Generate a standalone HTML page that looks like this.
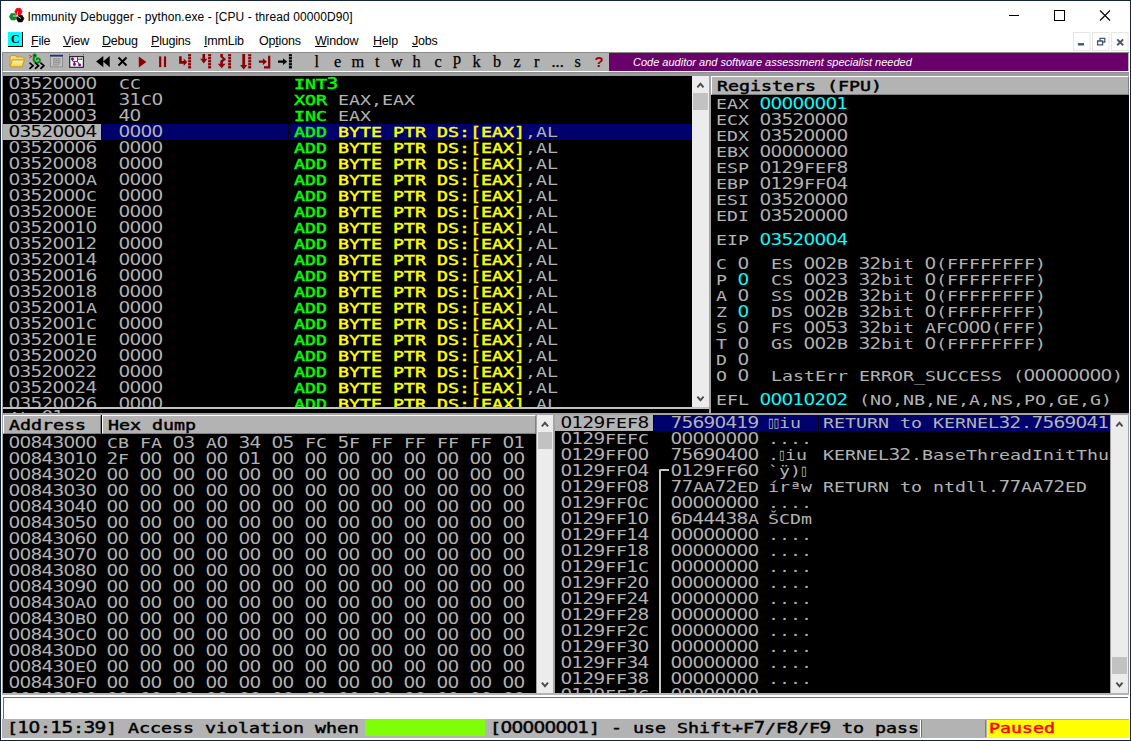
<!DOCTYPE html>
<html><head><meta charset="utf-8"><title>Immunity Debugger</title>
<style>
html,body{margin:0;padding:0;background:#fff;}
body{width:1131px;height:741px;overflow:hidden;position:relative;font-family:"Liberation Sans",sans-serif;}
#win{position:absolute;left:0;top:0;width:1131px;height:741px;background:#fff;overflow:hidden;}
#frame{position:absolute;left:0;top:0;width:1128.500px;height:738.500px;border-left:1px solid #16233f;border-top:1px solid #16233f;border-right:1.500px solid #16233f;border-bottom:1.500px solid #16233f;pointer-events:none;z-index:10}
#title{position:absolute;left:27.5px;top:10px;font:12px/14px "Liberation Sans",sans-serif;color:#000;white-space:nowrap;letter-spacing:0.09px}
#appicon{position:absolute;left:0;top:0}
#wctl{position:absolute;left:990.2px;top:0}
#cicon{position:absolute;left:8px;top:32px;width:14px;height:14px;background:#0ff;border-right:1px solid #000;border-bottom:1px solid #000;}
#cicon span{position:absolute;left:3px;top:0;font:bold 12px/14px "Liberation Serif",serif;color:#000}
.mi{position:absolute;top:33px;font:12.5px/16px "Liberation Sans",sans-serif;color:#000;white-space:nowrap;letter-spacing:-0.2px}
.mi u{text-decoration:underline;text-underline-offset:1px}
#mdi{position:absolute;left:1073px;top:31.500px}
#tb{position:absolute;left:2px;top:52px;width:1127px;height:20px;background:#b3b3b3;border-top:1px solid #8c8c8c;border-left:1px solid #8c8c8c;border-bottom:1px solid #fff;box-sizing:border-box}
#tbi{position:absolute;left:0;top:52px}
#banner{position:absolute;left:609px;top:53px;width:519px;height:18px;background:#6a006a}
#banner span{position:absolute;left:24px;top:2px;font:italic 11px/14px "Liberation Sans",sans-serif;color:#fff;white-space:nowrap}
.tl{position:absolute;top:52.5px;font:16.3px/18px "Liberation Serif",serif;color:#000;-webkit-text-stroke:0.25px #000}
.tl.q{top:53px;color:#a00000;font:bold 15px/18px "Liberation Sans",sans-serif;-webkit-text-stroke:0}
#mid{position:absolute;left:2px;top:72px;width:1127px;height:623px;background:#a4a4a6;border-top:1px solid #8e908e;box-sizing:border-box}
#mid2{position:absolute;left:2px;top:73px;width:1127px;height:3px;background:#9c9c9f}
#mid3{position:absolute;left:3px;top:407px;width:706px;height:2px;background:#c2c2c2}
#mid4{position:absolute;left:2px;top:693px;width:1127px;height:2px;background:#b3b3b3}
.pane{position:absolute;background:#000;overflow:hidden;color:#b3b3b3}
.r{position:absolute;height:16px;line-height:16px;white-space:pre;font-family:"DejaVu Sans Mono",monospace;font-size:15.5px;word-spacing:1.6682px;font-weight:normal}
.r span{line-height:16px}
.u,.n,.d{display:inline-block;transform-origin:0 0;white-space:pre;line-height:16px;vertical-align:baseline}
.u{font-family:"DejaVu Sans Mono",monospace;font-size:13.5px;transform:scaleX(1.3535)}
.B .u{font-weight:normal;-webkit-text-stroke:0.42px}
.d{font-family:"DejaVu Sans Mono",monospace;font-size:14.5px;transform:scaleX(1.26)}
.n{font-family:"DejaVu Sans","DejaVu Sans Mono",sans-serif;font-size:15.5px;transform:translateX(-0.6px) scaleX(1.19);letter-spacing:-0.616px}
.B .n,.B .d{font-weight:normal;-webkit-text-stroke:0.45px}
.g{color:#0f0;font-weight:bold}
.B{font-weight:bold}
.bx{display:inline-block;width:5.5px;font-family:"DejaVu Sans Mono",monospace;font-size:13px;line-height:16px;text-indent:-1.3px;white-space:pre;vertical-align:baseline;overflow:visible;transform:scaleY(1.3);transform-origin:0 80%}
.y{color:#ff0;font-weight:bold}
.selbg{position:absolute;background:#00006c}
.selad{position:absolute;background:#b3b3b3}
.hdr{position:absolute;background:#b3b3b3;color:#000;font-weight:bold;box-sizing:border-box;border-top:1px solid #fff;border-left:1px solid #fff;border-bottom:1px solid #808080;border-right:1px solid #808080}
.sb{position:absolute;background:#ececec}
.sb .th{position:absolute;left:1px;right:1px;background:#c2c2c2}
.sb i{position:absolute;left:5.4px;width:4.3px;height:4.3px;border-left:1.9px solid #484848;border-top:1.9px solid #484848}
.sb i.up{top:7.5px;transform:rotate(45deg)}
.sb i.dn{bottom:7.5px;transform:rotate(-135deg)}
#cmd{position:absolute;left:3px;top:697px;width:1125px;height:22px;background:#fff;border-top:1.5px solid #6e6e6e;border-left:1px solid #6e6e6e;box-sizing:border-box}
#status{position:absolute;left:2px;top:719px;width:1127px;height:19px;background:#b3b3b3}
</style></head>
<body><div id="win">
<div id="mid"></div><div id="mid2"></div><div id="mid3"></div><div id="mid4"></div>
<div id="title">Immunity Debugger - python.exe - [CPU - thread 00000D90]</div>
<svg id="appicon" width="32" height="30" viewBox="0 0 32 30">
<polygon points="22.30,11.60 20.40,14.89 16.60,14.89 14.70,11.60 16.60,8.31 20.40,8.31" fill="#f0001c" stroke="#f0001c" stroke-width="0.6" stroke-linejoin="round"/>
<polygon points="16.90,16.70 15.00,19.99 11.20,19.99 9.30,16.70 11.20,13.41 15.00,13.41" fill="#0c8a2a" stroke="#0c8a2a" stroke-width="0.6" stroke-linejoin="round"/>
<polygon points="24.00,18.60 22.10,21.89 18.30,21.89 16.40,18.60 18.30,15.31 22.10,15.31" fill="#000" stroke="#000" stroke-width="0.6" stroke-linejoin="round"/>
<path d="M17.500 11.500v4M12.800 16h4.400l3.800 2.400" stroke="#fff" stroke-width="0.9" fill="none" stroke-opacity="0.85"/>
</svg>
<svg id="wctl" width="140" height="31" viewBox="0 0 140 31">
<path d="M19 15.5h10" stroke="#000" stroke-width="1"/>
<rect x="64.5" y="10.5" width="10" height="10" fill="none" stroke="#000" stroke-width="1"/>
<path d="M110 10.5l10 10M120 10.5l-10 10" stroke="#000" stroke-width="1.1"/>
</svg>
<div id="cicon"><span>C</span></div>
<div class="mi" style="left:31px"><u>F</u>ile</div>
<div class="mi" style="left:63px"><u>V</u>iew</div>
<div class="mi" style="left:102px"><u>D</u>ebug</div>
<div class="mi" style="left:151px"><u>P</u>lugins</div>
<div class="mi" style="left:204px"><u>I</u>mmLib</div>
<div class="mi" style="left:259px">Op<u>t</u>ions</div>
<div class="mi" style="left:315px"><u>W</u>indow</div>
<div class="mi" style="left:373px"><u>H</u>elp</div>
<div class="mi" style="left:412px"><u>J</u>obs</div>
<svg id="mdi" width="58" height="20" viewBox="0 0 58 20">
<g fill="#fff" stroke="#e6e6e6"><rect x="0.5" y="0.5" width="16.5" height="18"/><rect x="19.5" y="0.5" width="16.5" height="18"/><rect x="38.5" y="0.5" width="16.500" height="18"/></g>
<path d="M4.900 12.300h6.200" stroke="#46546e" stroke-width="2.400"/>
<path d="M24.600 9h5v3.800h-5zM27 8.500v-2.200h4.800v3.800h-2" fill="none" stroke="#46546e" stroke-width="1.300"/>
<path d="M44.200 7.400l6 5.800M50.200 7.400l-6 5.800" stroke="#46546e" stroke-width="2"/>
</svg>
<div id="tb"></div>
<div id="banner"><span>Code auditor and software assessment specialist needed</span></div>
<div class="tl" style="left:314.5px">l</div>
<div class="tl" style="left:334px">e</div>
<div class="tl" style="left:351.5px">m</div>
<div class="tl" style="left:375px">t</div>
<div class="tl" style="left:391px">w</div>
<div class="tl" style="left:412.5px">h</div>
<div class="tl" style="left:434.5px">c</div>
<div class="tl" style="left:453px;top:49.7px">p</div>
<div class="tl" style="left:472.5px">k</div>
<div class="tl" style="left:493px">b</div>
<div class="tl" style="left:513.5px">z</div>
<div class="tl" style="left:534px">r</div>
<div class="tl" style="left:551.5px">...</div>
<div class="tl" style="left:574.5px">s</div>
<div class="tl q" style="left:594.5px">?</div>
<svg id="tbi" width="300" height="22" viewBox="0 52 300 22">
<defs><linearGradient id="fg" x1="0" y1="0" x2="0" y2="1"><stop offset="0" stop-color="#fff8b8"/><stop offset="1" stop-color="#f1cf55"/></linearGradient></defs>
<path d="M10 66v-8.500q0-2 2-2h3.500l1.500 1.500h5.500q1.500 0 1.500 1.500v2" fill="#f6dc78" stroke="#d1a01e" stroke-width="1.200"/>
<path d="M10 66.800l2.300-7h12.200l-2.300 7z" fill="url(#fg)" stroke="#d1a01e" stroke-width="1.200" stroke-linejoin="round"/>
<path d="M29.100 55.100l2.700 1.500-2.700 1.600M30.200 56.600h1.600" stroke="#f02030" stroke-width="0.900" fill="none"/>
<circle cx="34.700" cy="55.700" r="2.150" fill="#0a8a14"/><circle cx="34.500" cy="55.500" r="0.550" fill="#022"/>
<path d="M34 57.200C33.300 59.200 33.700 61.600 36 62.500C38.500 63.300 40.200 61.800 39.900 60C39.600 58.200 37.500 57.900 36.600 59.300" fill="none" stroke="#0a8a14" stroke-width="2.100" stroke-linecap="round"/>
<path d="M29.500 62.600l3.500 3.100-3.500 3.100M35 62.600l3.500 3.100-3.500 3.100M40.400 62.600l3.500 3.100-3.500 3.100" fill="none" stroke="#000" stroke-width="1.700"/>
<rect x="50.500" y="56.500" width="12" height="10.300" fill="#c4c4c4" stroke="#8c8c8c"/>
<rect x="50" y="54.800" width="13" height="1.600" fill="#28288c"/>
<path d="M53.500 58.500h6.500v5l-1.500 1.500h-5z" fill="#b0b0b0" stroke="#909090" stroke-width="0.800"/>
<path d="M54.500 60.500h4.500M54.500 62.500h4.500" stroke="#8a8a8a" stroke-width="0.800"/>
<rect x="69.700" y="56.600" width="13.700" height="10.700" fill="#fff" stroke="#2a2a2a" stroke-width="1.250"/>
<path d="M69.200 54.600h0.900M83.100 54.600h0.900" stroke="#222" stroke-width="0.800"/>
<g fill="#850088" stroke="#850088">
<circle cx="72.500" cy="59" r="1.300" stroke-width="0.500"/>
<path d="M77.500 57.200v4.600M77.900 59.200h3.600M72.300 60l0.800 1.600h4.400M74.600 61.600l-0.200 2M77.600 61.800l2.200 3.200" fill="none" stroke-width="0.950"/>
<circle cx="81.500" cy="59.100" r="0.500" stroke-width="0.400"/>
<ellipse cx="74.400" cy="64.300" rx="1.150" ry="1.450" stroke-width="0.500"/>
<ellipse cx="79.700" cy="65" rx="1.250" ry="1.150" stroke-width="0.500"/>
</g>
<path d="M103.300 56v11.200l-7.200-5.600zM109.700 56v11.200l-6.600-5.600z" fill="#000"/>
<path d="M118.500 57.500l8 8M126.500 57.500l-8 8" stroke="#000" stroke-width="2"/>
<path d="M138.800 56.400v11l7.600-5.500z" fill="#8c0004"/>
<rect x="159.100" y="56.400" width="2.200" height="10.700" fill="#8c0004"/><rect x="163.900" y="56.400" width="2.200" height="10.700" fill="#8c0004"/>
<path d="M179.100 56.300h2.600v4.800h2v-2.600l3.600 3.800-3.600 3.800v-2.400h-4.600z" fill="#8c0004"/>
<rect x="188.1" y="54.1" width="3" height="2.3" fill="#8c0004"/><rect x="188.1" y="57.1" width="3" height="2.3" fill="#8c0004"/><rect x="188.1" y="60.1" width="3" height="2.3" fill="#8c0004"/><rect x="188.1" y="63.1" width="3" height="2.3" fill="#8c0004"/><rect x="188.1" y="66.1" width="3" height="2.3" fill="#8c0004"/>
<path d="M202.500 54.100h2.600v4.600h2.300l-3.600 4.800-3.600-4.800h2.300z" fill="#8c0004"/>
<rect x="208.1" y="54.1" width="3" height="2.3" fill="#8c0004"/><rect x="208.1" y="57.1" width="3" height="2.3" fill="#8c0004"/><rect x="208.1" y="60.1" width="3" height="2.3" fill="#8c0004"/><rect x="208.1" y="63.1" width="3" height="2.3" fill="#8c0004"/><rect x="208.1" y="66.1" width="3" height="2.3" fill="#8c0004"/>
<path d="M220.300 54.100h2.600v2.400l3.200 2.800-3.200 2.600v1.900h2.700l-3.900 4.500-3.900-4.500h2.500v-3.100l2.600-1.700-2.600-1.900z" fill="#8c0004"/>
<rect x="228.1" y="54.1" width="3" height="2.3" fill="#8c0004"/><rect x="228.1" y="57.1" width="3" height="2.3" fill="#8c0004"/><rect x="228.1" y="60.1" width="3" height="2.3" fill="#8c0004"/><rect x="228.1" y="63.1" width="3" height="2.3" fill="#8c0004"/><rect x="228.1" y="66.1" width="3" height="2.3" fill="#8c0004"/>
<path d="M242.300 54.100h2.800v10.900h2.200l-3.600 4.500-3.600-4.500h2.200z" fill="#8c0004"/>
<rect x="248.2" y="54.1" width="3" height="2.3" fill="#8c0004"/><rect x="248.2" y="57.1" width="3" height="2.3" fill="#8c0004"/><rect x="248.2" y="60.1" width="3" height="2.3" fill="#8c0004"/><rect x="248.2" y="63.1" width="3" height="2.3" fill="#8c0004"/><rect x="248.2" y="66.1" width="3" height="2.3" fill="#8c0004"/>
<path d="M258.900 60.600h4v-2.300l4 3.400-4 3.400v-2.300h-4z" fill="#8c0004"/>
<path d="M268.100 55.700h2.200v12.700h-6.300v-2.100h4.100z" fill="#8c0004"/>
<path d="M278 60.600h5v-2.300l4.200 3.400-4.200 3.400v-2.300h-5z" fill="#000"/>
<rect x="288.9" y="54.1" width="3" height="2.3" fill="#000"/><rect x="288.9" y="57.1" width="3" height="2.3" fill="#000"/><rect x="288.9" y="60.1" width="3" height="2.3" fill="#000"/><rect x="288.9" y="63.1" width="3" height="2.3" fill="#000"/><rect x="288.9" y="66.1" width="3" height="2.3" fill="#000"/>
</svg>
<div class="pane" style="left:3px;top:76px;width:689px;height:331px">
<div class="r" style="left:5.5px;top:0px;"><span class="n" style="width:88px">03520000</span></div>
<div class="r" style="left:115.5px;top:0px;"><span class="u" style="width:22px">CC</span></div>
<div class="r" style="left:290.5px;top:0px;"><span class="g B"><span class="u" style="width:33px">INT</span><span class="n" style="width:11px">3</span></span></div>
<div class="r" style="left:5.5px;top:16px;"><span class="n" style="width:88px">03520001</span></div>
<div class="r" style="left:115.5px;top:16px;"><span class="n" style="width:22px">31</span><span class="u" style="width:11px">C</span><span class="n" style="width:11px">0</span></div>
<div class="r" style="left:290.5px;top:16px;"><span class="g B"><span class="u" style="width:33px">XOR</span></span> <span class="u" style="width:33px">EAX</span><span class="d" style="width:11px">,</span><span class="u" style="width:33px">EAX</span></div>
<div class="r" style="left:5.5px;top:32px;"><span class="n" style="width:88px">03520003</span></div>
<div class="r" style="left:115.5px;top:32px;"><span class="n" style="width:22px">40</span></div>
<div class="r" style="left:290.5px;top:32px;"><span class="g B"><span class="u" style="width:33px">INC</span></span> <span class="u" style="width:33px">EAX</span></div>
<div class="selbg" style="left:99px;top:48px;width:590px;height:16px"></div>
<div class="selad" style="left:0;top:48px;width:98px;height:16px"></div>
<div style="position:absolute;left:285px;top:48px;width:1px;height:16px;background:#000"></div>
<div class="r" style="left:5.5px;top:48px;color:#000"><span class="n" style="width:88px">03520004</span></div>
<div class="r" style="left:115.5px;top:48px;"><span class="n" style="width:44px">0000</span></div>
<div class="r" style="left:290.5px;top:48px;"><span class="g B"><span class="u" style="width:33px">ADD</span></span><span class="y B"> <span class="u" style="width:44px">BYTE</span> <span class="u" style="width:33px">PTR</span> <span class="u" style="width:22px">DS</span><span class="d" style="width:22px">:[</span><span class="u" style="width:33px">EAX</span><span class="d" style="width:11px">]</span></span><span class="d" style="width:11px">,</span><span class="u" style="width:22px">AL</span></div>
<div class="r" style="left:5.5px;top:64px;"><span class="n" style="width:88px">03520006</span></div>
<div class="r" style="left:115.5px;top:64px;"><span class="n" style="width:44px">0000</span></div>
<div class="r" style="left:290.5px;top:64px;"><span class="g B"><span class="u" style="width:33px">ADD</span></span><span class="y B"> <span class="u" style="width:44px">BYTE</span> <span class="u" style="width:33px">PTR</span> <span class="u" style="width:22px">DS</span><span class="d" style="width:22px">:[</span><span class="u" style="width:33px">EAX</span><span class="d" style="width:11px">]</span></span><span class="d" style="width:11px">,</span><span class="u" style="width:22px">AL</span></div>
<div class="r" style="left:5.5px;top:80px;"><span class="n" style="width:88px">03520008</span></div>
<div class="r" style="left:115.5px;top:80px;"><span class="n" style="width:44px">0000</span></div>
<div class="r" style="left:290.5px;top:80px;"><span class="g B"><span class="u" style="width:33px">ADD</span></span><span class="y B"> <span class="u" style="width:44px">BYTE</span> <span class="u" style="width:33px">PTR</span> <span class="u" style="width:22px">DS</span><span class="d" style="width:22px">:[</span><span class="u" style="width:33px">EAX</span><span class="d" style="width:11px">]</span></span><span class="d" style="width:11px">,</span><span class="u" style="width:22px">AL</span></div>
<div class="r" style="left:5.5px;top:96px;"><span class="n" style="width:77px">0352000</span><span class="u" style="width:11px">A</span></div>
<div class="r" style="left:115.5px;top:96px;"><span class="n" style="width:44px">0000</span></div>
<div class="r" style="left:290.5px;top:96px;"><span class="g B"><span class="u" style="width:33px">ADD</span></span><span class="y B"> <span class="u" style="width:44px">BYTE</span> <span class="u" style="width:33px">PTR</span> <span class="u" style="width:22px">DS</span><span class="d" style="width:22px">:[</span><span class="u" style="width:33px">EAX</span><span class="d" style="width:11px">]</span></span><span class="d" style="width:11px">,</span><span class="u" style="width:22px">AL</span></div>
<div class="r" style="left:5.5px;top:112px;"><span class="n" style="width:77px">0352000</span><span class="u" style="width:11px">C</span></div>
<div class="r" style="left:115.5px;top:112px;"><span class="n" style="width:44px">0000</span></div>
<div class="r" style="left:290.5px;top:112px;"><span class="g B"><span class="u" style="width:33px">ADD</span></span><span class="y B"> <span class="u" style="width:44px">BYTE</span> <span class="u" style="width:33px">PTR</span> <span class="u" style="width:22px">DS</span><span class="d" style="width:22px">:[</span><span class="u" style="width:33px">EAX</span><span class="d" style="width:11px">]</span></span><span class="d" style="width:11px">,</span><span class="u" style="width:22px">AL</span></div>
<div class="r" style="left:5.5px;top:128px;"><span class="n" style="width:77px">0352000</span><span class="u" style="width:11px">E</span></div>
<div class="r" style="left:115.5px;top:128px;"><span class="n" style="width:44px">0000</span></div>
<div class="r" style="left:290.5px;top:128px;"><span class="g B"><span class="u" style="width:33px">ADD</span></span><span class="y B"> <span class="u" style="width:44px">BYTE</span> <span class="u" style="width:33px">PTR</span> <span class="u" style="width:22px">DS</span><span class="d" style="width:22px">:[</span><span class="u" style="width:33px">EAX</span><span class="d" style="width:11px">]</span></span><span class="d" style="width:11px">,</span><span class="u" style="width:22px">AL</span></div>
<div class="r" style="left:5.5px;top:144px;"><span class="n" style="width:88px">03520010</span></div>
<div class="r" style="left:115.5px;top:144px;"><span class="n" style="width:44px">0000</span></div>
<div class="r" style="left:290.5px;top:144px;"><span class="g B"><span class="u" style="width:33px">ADD</span></span><span class="y B"> <span class="u" style="width:44px">BYTE</span> <span class="u" style="width:33px">PTR</span> <span class="u" style="width:22px">DS</span><span class="d" style="width:22px">:[</span><span class="u" style="width:33px">EAX</span><span class="d" style="width:11px">]</span></span><span class="d" style="width:11px">,</span><span class="u" style="width:22px">AL</span></div>
<div class="r" style="left:5.5px;top:160px;"><span class="n" style="width:88px">03520012</span></div>
<div class="r" style="left:115.5px;top:160px;"><span class="n" style="width:44px">0000</span></div>
<div class="r" style="left:290.5px;top:160px;"><span class="g B"><span class="u" style="width:33px">ADD</span></span><span class="y B"> <span class="u" style="width:44px">BYTE</span> <span class="u" style="width:33px">PTR</span> <span class="u" style="width:22px">DS</span><span class="d" style="width:22px">:[</span><span class="u" style="width:33px">EAX</span><span class="d" style="width:11px">]</span></span><span class="d" style="width:11px">,</span><span class="u" style="width:22px">AL</span></div>
<div class="r" style="left:5.5px;top:176px;"><span class="n" style="width:88px">03520014</span></div>
<div class="r" style="left:115.5px;top:176px;"><span class="n" style="width:44px">0000</span></div>
<div class="r" style="left:290.5px;top:176px;"><span class="g B"><span class="u" style="width:33px">ADD</span></span><span class="y B"> <span class="u" style="width:44px">BYTE</span> <span class="u" style="width:33px">PTR</span> <span class="u" style="width:22px">DS</span><span class="d" style="width:22px">:[</span><span class="u" style="width:33px">EAX</span><span class="d" style="width:11px">]</span></span><span class="d" style="width:11px">,</span><span class="u" style="width:22px">AL</span></div>
<div class="r" style="left:5.5px;top:192px;"><span class="n" style="width:88px">03520016</span></div>
<div class="r" style="left:115.5px;top:192px;"><span class="n" style="width:44px">0000</span></div>
<div class="r" style="left:290.5px;top:192px;"><span class="g B"><span class="u" style="width:33px">ADD</span></span><span class="y B"> <span class="u" style="width:44px">BYTE</span> <span class="u" style="width:33px">PTR</span> <span class="u" style="width:22px">DS</span><span class="d" style="width:22px">:[</span><span class="u" style="width:33px">EAX</span><span class="d" style="width:11px">]</span></span><span class="d" style="width:11px">,</span><span class="u" style="width:22px">AL</span></div>
<div class="r" style="left:5.5px;top:208px;"><span class="n" style="width:88px">03520018</span></div>
<div class="r" style="left:115.5px;top:208px;"><span class="n" style="width:44px">0000</span></div>
<div class="r" style="left:290.5px;top:208px;"><span class="g B"><span class="u" style="width:33px">ADD</span></span><span class="y B"> <span class="u" style="width:44px">BYTE</span> <span class="u" style="width:33px">PTR</span> <span class="u" style="width:22px">DS</span><span class="d" style="width:22px">:[</span><span class="u" style="width:33px">EAX</span><span class="d" style="width:11px">]</span></span><span class="d" style="width:11px">,</span><span class="u" style="width:22px">AL</span></div>
<div class="r" style="left:5.5px;top:224px;"><span class="n" style="width:77px">0352001</span><span class="u" style="width:11px">A</span></div>
<div class="r" style="left:115.5px;top:224px;"><span class="n" style="width:44px">0000</span></div>
<div class="r" style="left:290.5px;top:224px;"><span class="g B"><span class="u" style="width:33px">ADD</span></span><span class="y B"> <span class="u" style="width:44px">BYTE</span> <span class="u" style="width:33px">PTR</span> <span class="u" style="width:22px">DS</span><span class="d" style="width:22px">:[</span><span class="u" style="width:33px">EAX</span><span class="d" style="width:11px">]</span></span><span class="d" style="width:11px">,</span><span class="u" style="width:22px">AL</span></div>
<div class="r" style="left:5.5px;top:240px;"><span class="n" style="width:77px">0352001</span><span class="u" style="width:11px">C</span></div>
<div class="r" style="left:115.5px;top:240px;"><span class="n" style="width:44px">0000</span></div>
<div class="r" style="left:290.5px;top:240px;"><span class="g B"><span class="u" style="width:33px">ADD</span></span><span class="y B"> <span class="u" style="width:44px">BYTE</span> <span class="u" style="width:33px">PTR</span> <span class="u" style="width:22px">DS</span><span class="d" style="width:22px">:[</span><span class="u" style="width:33px">EAX</span><span class="d" style="width:11px">]</span></span><span class="d" style="width:11px">,</span><span class="u" style="width:22px">AL</span></div>
<div class="r" style="left:5.5px;top:256px;"><span class="n" style="width:77px">0352001</span><span class="u" style="width:11px">E</span></div>
<div class="r" style="left:115.5px;top:256px;"><span class="n" style="width:44px">0000</span></div>
<div class="r" style="left:290.5px;top:256px;"><span class="g B"><span class="u" style="width:33px">ADD</span></span><span class="y B"> <span class="u" style="width:44px">BYTE</span> <span class="u" style="width:33px">PTR</span> <span class="u" style="width:22px">DS</span><span class="d" style="width:22px">:[</span><span class="u" style="width:33px">EAX</span><span class="d" style="width:11px">]</span></span><span class="d" style="width:11px">,</span><span class="u" style="width:22px">AL</span></div>
<div class="r" style="left:5.5px;top:272px;"><span class="n" style="width:88px">03520020</span></div>
<div class="r" style="left:115.5px;top:272px;"><span class="n" style="width:44px">0000</span></div>
<div class="r" style="left:290.5px;top:272px;"><span class="g B"><span class="u" style="width:33px">ADD</span></span><span class="y B"> <span class="u" style="width:44px">BYTE</span> <span class="u" style="width:33px">PTR</span> <span class="u" style="width:22px">DS</span><span class="d" style="width:22px">:[</span><span class="u" style="width:33px">EAX</span><span class="d" style="width:11px">]</span></span><span class="d" style="width:11px">,</span><span class="u" style="width:22px">AL</span></div>
<div class="r" style="left:5.5px;top:288px;"><span class="n" style="width:88px">03520022</span></div>
<div class="r" style="left:115.5px;top:288px;"><span class="n" style="width:44px">0000</span></div>
<div class="r" style="left:290.5px;top:288px;"><span class="g B"><span class="u" style="width:33px">ADD</span></span><span class="y B"> <span class="u" style="width:44px">BYTE</span> <span class="u" style="width:33px">PTR</span> <span class="u" style="width:22px">DS</span><span class="d" style="width:22px">:[</span><span class="u" style="width:33px">EAX</span><span class="d" style="width:11px">]</span></span><span class="d" style="width:11px">,</span><span class="u" style="width:22px">AL</span></div>
<div class="r" style="left:5.5px;top:304px;"><span class="n" style="width:88px">03520024</span></div>
<div class="r" style="left:115.5px;top:304px;"><span class="n" style="width:44px">0000</span></div>
<div class="r" style="left:290.5px;top:304px;"><span class="g B"><span class="u" style="width:33px">ADD</span></span><span class="y B"> <span class="u" style="width:44px">BYTE</span> <span class="u" style="width:33px">PTR</span> <span class="u" style="width:22px">DS</span><span class="d" style="width:22px">:[</span><span class="u" style="width:33px">EAX</span><span class="d" style="width:11px">]</span></span><span class="d" style="width:11px">,</span><span class="u" style="width:22px">AL</span></div>
<div class="r" style="left:5.5px;top:320px;"><span class="n" style="width:88px">03520026</span></div>
<div class="r" style="left:115.5px;top:320px;"><span class="n" style="width:44px">0000</span></div>
<div class="r" style="left:290.5px;top:320px;"><span class="g B"><span class="u" style="width:33px">ADD</span></span><span class="y B"> <span class="u" style="width:44px">BYTE</span> <span class="u" style="width:33px">PTR</span> <span class="u" style="width:22px">DS</span><span class="d" style="width:22px">:[</span><span class="u" style="width:33px">EAX</span><span class="d" style="width:11px">]</span></span><span class="d" style="width:11px">,</span><span class="u" style="width:22px">AL</span></div>
</div>
<div class="sb" style="left:692px;top:76px;width:17px;height:331px"><div class="th" style="top:17px;height:17px"></div><svg width="17" height="331" viewBox="0 0 17 331" style="position:absolute;left:0;top:0"><path d="M5.35 11.4L8.45 7.8L11.55 11.4M5.35 320.60L8.45 324.20L11.55 320.60" fill="none" stroke="#4c4c4c" stroke-width="1.9"/></svg></div>
<div class="pane" style="left:711px;top:76px;width:418px;height:337px">
<div class="hdr B" style="left:0;top:0;width:418px;height:19px"><div class="r" style="left:5px;top:1px"><span class="u" style="width:11px">R</span><span class="d" style="width:88px">egisters</span> <span class="d" style="width:11px">(</span><span class="u" style="width:33px">FPU</span><span class="d" style="width:11px">)</span></div></div>
<div class="r" style="left:5px;top:20px;"><span class="u" style="width:33px">EAX</span></div>
<div class="r" style="left:49px;top:20px;color:#0ff"><span class="n" style="width:88px">00000001</span></div>
<div class="r" style="left:5px;top:36px;"><span class="u" style="width:33px">ECX</span></div>
<div class="r" style="left:49px;top:36px;"><span class="n" style="width:88px">03520000</span></div>
<div class="r" style="left:5px;top:52px;"><span class="u" style="width:33px">EDX</span></div>
<div class="r" style="left:49px;top:52px;"><span class="n" style="width:88px">03520000</span></div>
<div class="r" style="left:5px;top:68px;"><span class="u" style="width:33px">EBX</span></div>
<div class="r" style="left:49px;top:68px;"><span class="n" style="width:88px">00000000</span></div>
<div class="r" style="left:5px;top:84px;"><span class="u" style="width:33px">ESP</span></div>
<div class="r" style="left:49px;top:84px;"><span class="n" style="width:44px">0129</span><span class="u" style="width:33px">FEF</span><span class="n" style="width:11px">8</span></div>
<div class="r" style="left:5px;top:100px;"><span class="u" style="width:33px">EBP</span></div>
<div class="r" style="left:49px;top:100px;"><span class="n" style="width:44px">0129</span><span class="u" style="width:22px">FF</span><span class="n" style="width:22px">04</span></div>
<div class="r" style="left:5px;top:116px;"><span class="u" style="width:33px">ESI</span></div>
<div class="r" style="left:49px;top:116px;"><span class="n" style="width:88px">03520000</span></div>
<div class="r" style="left:5px;top:132px;"><span class="u" style="width:33px">EDI</span></div>
<div class="r" style="left:49px;top:132px;"><span class="n" style="width:88px">03520000</span></div>
<div class="r" style="left:5px;top:156px;"><span class="u" style="width:33px">EIP</span></div>
<div class="r" style="left:49px;top:156px;color:#0ff"><span class="n" style="width:88px">03520004</span></div>
<div class="r" style="left:5px;top:180px;"><span class="u" style="width:11px">C</span></div>
<div class="r" style="left:27px;top:180px;"><span class="n" style="width:11px">0</span></div>
<div class="r" style="left:60px;top:180px;"><span class="u" style="width:22px">ES</span> <span class="n" style="width:33px">002</span><span class="u" style="width:11px">B</span> <span class="n" style="width:22px">32</span><span class="d" style="width:33px">bit</span> <span class="n" style="width:11px">0</span><span class="d" style="width:11px">(</span><span class="u" style="width:88px">FFFFFFFF</span><span class="d" style="width:11px">)</span></div>
<div class="r" style="left:5px;top:196px;"><span class="u" style="width:11px">P</span></div>
<div class="r" style="left:27px;top:196px;color:#0ff"><span class="n" style="width:11px">0</span></div>
<div class="r" style="left:60px;top:196px;"><span class="u" style="width:22px">CS</span> <span class="n" style="width:44px">0023</span> <span class="n" style="width:22px">32</span><span class="d" style="width:33px">bit</span> <span class="n" style="width:11px">0</span><span class="d" style="width:11px">(</span><span class="u" style="width:88px">FFFFFFFF</span><span class="d" style="width:11px">)</span></div>
<div class="r" style="left:5px;top:212px;"><span class="u" style="width:11px">A</span></div>
<div class="r" style="left:27px;top:212px;"><span class="n" style="width:11px">0</span></div>
<div class="r" style="left:60px;top:212px;"><span class="u" style="width:22px">SS</span> <span class="n" style="width:33px">002</span><span class="u" style="width:11px">B</span> <span class="n" style="width:22px">32</span><span class="d" style="width:33px">bit</span> <span class="n" style="width:11px">0</span><span class="d" style="width:11px">(</span><span class="u" style="width:88px">FFFFFFFF</span><span class="d" style="width:11px">)</span></div>
<div class="r" style="left:5px;top:228px;"><span class="u" style="width:11px">Z</span></div>
<div class="r" style="left:27px;top:228px;color:#0ff"><span class="n" style="width:11px">0</span></div>
<div class="r" style="left:60px;top:228px;"><span class="u" style="width:22px">DS</span> <span class="n" style="width:33px">002</span><span class="u" style="width:11px">B</span> <span class="n" style="width:22px">32</span><span class="d" style="width:33px">bit</span> <span class="n" style="width:11px">0</span><span class="d" style="width:11px">(</span><span class="u" style="width:88px">FFFFFFFF</span><span class="d" style="width:11px">)</span></div>
<div class="r" style="left:5px;top:244px;"><span class="u" style="width:11px">S</span></div>
<div class="r" style="left:27px;top:244px;"><span class="n" style="width:11px">0</span></div>
<div class="r" style="left:60px;top:244px;"><span class="u" style="width:22px">FS</span> <span class="n" style="width:44px">0053</span> <span class="n" style="width:22px">32</span><span class="d" style="width:33px">bit</span> <span class="u" style="width:33px">AFC</span><span class="n" style="width:33px">000</span><span class="d" style="width:11px">(</span><span class="u" style="width:33px">FFF</span><span class="d" style="width:11px">)</span></div>
<div class="r" style="left:5px;top:260px;"><span class="u" style="width:11px">T</span></div>
<div class="r" style="left:27px;top:260px;"><span class="n" style="width:11px">0</span></div>
<div class="r" style="left:60px;top:260px;"><span class="u" style="width:22px">GS</span> <span class="n" style="width:33px">002</span><span class="u" style="width:11px">B</span> <span class="n" style="width:22px">32</span><span class="d" style="width:33px">bit</span> <span class="n" style="width:11px">0</span><span class="d" style="width:11px">(</span><span class="u" style="width:88px">FFFFFFFF</span><span class="d" style="width:11px">)</span></div>
<div class="r" style="left:5px;top:276px;"><span class="u" style="width:11px">D</span></div>
<div class="r" style="left:27px;top:276px;"><span class="n" style="width:11px">0</span></div>
<div class="r" style="left:5px;top:292px;"><span class="u" style="width:11px">O</span></div>
<div class="r" style="left:27px;top:292px;"><span class="n" style="width:11px">0</span></div>
<div class="r" style="left:60px;top:292px;"><span class="u" style="width:11px">L</span><span class="d" style="width:33px">ast</span><span class="u" style="width:11px">E</span><span class="d" style="width:22px">rr</span> <span class="u" style="width:55px">ERROR</span><span class="d" style="width:11px">_</span><span class="u" style="width:77px">SUCCESS</span> <span class="d" style="width:11px">(</span><span class="n" style="width:88px">00000000</span><span class="d" style="width:11px">)</span></div>
<div class="r" style="left:5px;top:316px;"><span class="u" style="width:33px">EFL</span></div>
<div class="r" style="left:49px;top:316px;color:#0ff"><span class="n" style="width:88px">00010202</span></div>
<div class="r" style="left:148px;top:316px;"><span class="d" style="width:11px">(</span><span class="u" style="width:22px">NO</span><span class="d" style="width:11px">,</span><span class="u" style="width:22px">NB</span><span class="d" style="width:11px">,</span><span class="u" style="width:22px">NE</span><span class="d" style="width:11px">,</span><span class="u" style="width:11px">A</span><span class="d" style="width:11px">,</span><span class="u" style="width:22px">NS</span><span class="d" style="width:11px">,</span><span class="u" style="width:22px">PO</span><span class="d" style="width:11px">,</span><span class="u" style="width:22px">GE</span><span class="d" style="width:11px">,</span><span class="u" style="width:11px">G</span><span class="d" style="width:11px">)</span></div>
</div>
<div class="pane" style="left:3px;top:409px;width:706px;height:4px">
<div class="r" style="left:5.5px;top:0px;"><span class="u" style="width:22px">AL</span><span class="d" style="width:11px">=</span><span class="n" style="width:22px">01</span></div>
</div>
<div class="pane" style="left:3px;top:415px;width:533px;height:278px">
<div class="hdr B" style="left:0;top:0;width:98px;height:19px"><div class="r" style="left:4.5px;top:1px"><span class="u" style="width:11px">A</span><span class="d" style="width:66px">ddress</span></div></div>
<div class="hdr B" style="left:99px;top:0;width:434px;height:19px"><div class="r" style="left:4.5px;top:1px"><span class="u" style="width:11px">H</span><span class="d" style="width:22px">ex</span> <span class="d" style="width:44px">dump</span></div></div>
<div class="r" style="left:5.5px;top:20px;"><span class="n" style="width:88px">00843000</span></div>
<div class="r" style="left:104.0px;top:20px;"><span class="u" style="width:22px">CB</span> <span class="u" style="width:22px">FA</span> <span class="n" style="width:22px">03</span> <span class="u" style="width:11px">A</span><span class="n" style="width:11px">0</span> <span class="n" style="width:22px">34</span> <span class="n" style="width:22px">05</span> <span class="u" style="width:22px">FC</span> <span class="n" style="width:11px">5</span><span class="u" style="width:11px">F</span> <span class="u" style="width:22px">FF</span> <span class="u" style="width:22px">FF</span> <span class="u" style="width:22px">FF</span> <span class="u" style="width:22px">FF</span> <span class="n" style="width:22px">01</span></div>
<div class="r" style="left:5.5px;top:36px;"><span class="n" style="width:88px">00843010</span></div>
<div class="r" style="left:104.0px;top:36px;"><span class="n" style="width:11px">2</span><span class="u" style="width:11px">F</span> <span class="n" style="width:22px">00</span> <span class="n" style="width:22px">00</span> <span class="n" style="width:22px">00</span> <span class="n" style="width:22px">01</span> <span class="n" style="width:22px">00</span> <span class="n" style="width:22px">00</span> <span class="n" style="width:22px">00</span> <span class="n" style="width:22px">00</span> <span class="n" style="width:22px">00</span> <span class="n" style="width:22px">00</span> <span class="n" style="width:22px">00</span> <span class="n" style="width:22px">00</span></div>
<div class="r" style="left:5.5px;top:52px;"><span class="n" style="width:88px">00843020</span></div>
<div class="r" style="left:104.0px;top:52px;"><span class="n" style="width:22px">00</span> <span class="n" style="width:22px">00</span> <span class="n" style="width:22px">00</span> <span class="n" style="width:22px">00</span> <span class="n" style="width:22px">00</span> <span class="n" style="width:22px">00</span> <span class="n" style="width:22px">00</span> <span class="n" style="width:22px">00</span> <span class="n" style="width:22px">00</span> <span class="n" style="width:22px">00</span> <span class="n" style="width:22px">00</span> <span class="n" style="width:22px">00</span> <span class="n" style="width:22px">00</span></div>
<div class="r" style="left:5.5px;top:68px;"><span class="n" style="width:88px">00843030</span></div>
<div class="r" style="left:104.0px;top:68px;"><span class="n" style="width:22px">00</span> <span class="n" style="width:22px">00</span> <span class="n" style="width:22px">00</span> <span class="n" style="width:22px">00</span> <span class="n" style="width:22px">00</span> <span class="n" style="width:22px">00</span> <span class="n" style="width:22px">00</span> <span class="n" style="width:22px">00</span> <span class="n" style="width:22px">00</span> <span class="n" style="width:22px">00</span> <span class="n" style="width:22px">00</span> <span class="n" style="width:22px">00</span> <span class="n" style="width:22px">00</span></div>
<div class="r" style="left:5.5px;top:84px;"><span class="n" style="width:88px">00843040</span></div>
<div class="r" style="left:104.0px;top:84px;"><span class="n" style="width:22px">00</span> <span class="n" style="width:22px">00</span> <span class="n" style="width:22px">00</span> <span class="n" style="width:22px">00</span> <span class="n" style="width:22px">00</span> <span class="n" style="width:22px">00</span> <span class="n" style="width:22px">00</span> <span class="n" style="width:22px">00</span> <span class="n" style="width:22px">00</span> <span class="n" style="width:22px">00</span> <span class="n" style="width:22px">00</span> <span class="n" style="width:22px">00</span> <span class="n" style="width:22px">00</span></div>
<div class="r" style="left:5.5px;top:100px;"><span class="n" style="width:88px">00843050</span></div>
<div class="r" style="left:104.0px;top:100px;"><span class="n" style="width:22px">00</span> <span class="n" style="width:22px">00</span> <span class="n" style="width:22px">00</span> <span class="n" style="width:22px">00</span> <span class="n" style="width:22px">00</span> <span class="n" style="width:22px">00</span> <span class="n" style="width:22px">00</span> <span class="n" style="width:22px">00</span> <span class="n" style="width:22px">00</span> <span class="n" style="width:22px">00</span> <span class="n" style="width:22px">00</span> <span class="n" style="width:22px">00</span> <span class="n" style="width:22px">00</span></div>
<div class="r" style="left:5.5px;top:116px;"><span class="n" style="width:88px">00843060</span></div>
<div class="r" style="left:104.0px;top:116px;"><span class="n" style="width:22px">00</span> <span class="n" style="width:22px">00</span> <span class="n" style="width:22px">00</span> <span class="n" style="width:22px">00</span> <span class="n" style="width:22px">00</span> <span class="n" style="width:22px">00</span> <span class="n" style="width:22px">00</span> <span class="n" style="width:22px">00</span> <span class="n" style="width:22px">00</span> <span class="n" style="width:22px">00</span> <span class="n" style="width:22px">00</span> <span class="n" style="width:22px">00</span> <span class="n" style="width:22px">00</span></div>
<div class="r" style="left:5.5px;top:132px;"><span class="n" style="width:88px">00843070</span></div>
<div class="r" style="left:104.0px;top:132px;"><span class="n" style="width:22px">00</span> <span class="n" style="width:22px">00</span> <span class="n" style="width:22px">00</span> <span class="n" style="width:22px">00</span> <span class="n" style="width:22px">00</span> <span class="n" style="width:22px">00</span> <span class="n" style="width:22px">00</span> <span class="n" style="width:22px">00</span> <span class="n" style="width:22px">00</span> <span class="n" style="width:22px">00</span> <span class="n" style="width:22px">00</span> <span class="n" style="width:22px">00</span> <span class="n" style="width:22px">00</span></div>
<div class="r" style="left:5.5px;top:148px;"><span class="n" style="width:88px">00843080</span></div>
<div class="r" style="left:104.0px;top:148px;"><span class="n" style="width:22px">00</span> <span class="n" style="width:22px">00</span> <span class="n" style="width:22px">00</span> <span class="n" style="width:22px">00</span> <span class="n" style="width:22px">00</span> <span class="n" style="width:22px">00</span> <span class="n" style="width:22px">00</span> <span class="n" style="width:22px">00</span> <span class="n" style="width:22px">00</span> <span class="n" style="width:22px">00</span> <span class="n" style="width:22px">00</span> <span class="n" style="width:22px">00</span> <span class="n" style="width:22px">00</span></div>
<div class="r" style="left:5.5px;top:164px;"><span class="n" style="width:88px">00843090</span></div>
<div class="r" style="left:104.0px;top:164px;"><span class="n" style="width:22px">00</span> <span class="n" style="width:22px">00</span> <span class="n" style="width:22px">00</span> <span class="n" style="width:22px">00</span> <span class="n" style="width:22px">00</span> <span class="n" style="width:22px">00</span> <span class="n" style="width:22px">00</span> <span class="n" style="width:22px">00</span> <span class="n" style="width:22px">00</span> <span class="n" style="width:22px">00</span> <span class="n" style="width:22px">00</span> <span class="n" style="width:22px">00</span> <span class="n" style="width:22px">00</span></div>
<div class="r" style="left:5.5px;top:180px;"><span class="n" style="width:66px">008430</span><span class="u" style="width:11px">A</span><span class="n" style="width:11px">0</span></div>
<div class="r" style="left:104.0px;top:180px;"><span class="n" style="width:22px">00</span> <span class="n" style="width:22px">00</span> <span class="n" style="width:22px">00</span> <span class="n" style="width:22px">00</span> <span class="n" style="width:22px">00</span> <span class="n" style="width:22px">00</span> <span class="n" style="width:22px">00</span> <span class="n" style="width:22px">00</span> <span class="n" style="width:22px">00</span> <span class="n" style="width:22px">00</span> <span class="n" style="width:22px">00</span> <span class="n" style="width:22px">00</span> <span class="n" style="width:22px">00</span></div>
<div class="r" style="left:5.5px;top:196px;"><span class="n" style="width:66px">008430</span><span class="u" style="width:11px">B</span><span class="n" style="width:11px">0</span></div>
<div class="r" style="left:104.0px;top:196px;"><span class="n" style="width:22px">00</span> <span class="n" style="width:22px">00</span> <span class="n" style="width:22px">00</span> <span class="n" style="width:22px">00</span> <span class="n" style="width:22px">00</span> <span class="n" style="width:22px">00</span> <span class="n" style="width:22px">00</span> <span class="n" style="width:22px">00</span> <span class="n" style="width:22px">00</span> <span class="n" style="width:22px">00</span> <span class="n" style="width:22px">00</span> <span class="n" style="width:22px">00</span> <span class="n" style="width:22px">00</span></div>
<div class="r" style="left:5.5px;top:212px;"><span class="n" style="width:66px">008430</span><span class="u" style="width:11px">C</span><span class="n" style="width:11px">0</span></div>
<div class="r" style="left:104.0px;top:212px;"><span class="n" style="width:22px">00</span> <span class="n" style="width:22px">00</span> <span class="n" style="width:22px">00</span> <span class="n" style="width:22px">00</span> <span class="n" style="width:22px">00</span> <span class="n" style="width:22px">00</span> <span class="n" style="width:22px">00</span> <span class="n" style="width:22px">00</span> <span class="n" style="width:22px">00</span> <span class="n" style="width:22px">00</span> <span class="n" style="width:22px">00</span> <span class="n" style="width:22px">00</span> <span class="n" style="width:22px">00</span></div>
<div class="r" style="left:5.5px;top:228px;"><span class="n" style="width:66px">008430</span><span class="u" style="width:11px">D</span><span class="n" style="width:11px">0</span></div>
<div class="r" style="left:104.0px;top:228px;"><span class="n" style="width:22px">00</span> <span class="n" style="width:22px">00</span> <span class="n" style="width:22px">00</span> <span class="n" style="width:22px">00</span> <span class="n" style="width:22px">00</span> <span class="n" style="width:22px">00</span> <span class="n" style="width:22px">00</span> <span class="n" style="width:22px">00</span> <span class="n" style="width:22px">00</span> <span class="n" style="width:22px">00</span> <span class="n" style="width:22px">00</span> <span class="n" style="width:22px">00</span> <span class="n" style="width:22px">00</span></div>
<div class="r" style="left:5.5px;top:244px;"><span class="n" style="width:66px">008430</span><span class="u" style="width:11px">E</span><span class="n" style="width:11px">0</span></div>
<div class="r" style="left:104.0px;top:244px;"><span class="n" style="width:22px">00</span> <span class="n" style="width:22px">00</span> <span class="n" style="width:22px">00</span> <span class="n" style="width:22px">00</span> <span class="n" style="width:22px">00</span> <span class="n" style="width:22px">00</span> <span class="n" style="width:22px">00</span> <span class="n" style="width:22px">00</span> <span class="n" style="width:22px">00</span> <span class="n" style="width:22px">00</span> <span class="n" style="width:22px">00</span> <span class="n" style="width:22px">00</span> <span class="n" style="width:22px">00</span></div>
<div class="r" style="left:5.5px;top:260px;"><span class="n" style="width:66px">008430</span><span class="u" style="width:11px">F</span><span class="n" style="width:11px">0</span></div>
<div class="r" style="left:104.0px;top:260px;"><span class="n" style="width:22px">00</span> <span class="n" style="width:22px">00</span> <span class="n" style="width:22px">00</span> <span class="n" style="width:22px">00</span> <span class="n" style="width:22px">00</span> <span class="n" style="width:22px">00</span> <span class="n" style="width:22px">00</span> <span class="n" style="width:22px">00</span> <span class="n" style="width:22px">00</span> <span class="n" style="width:22px">00</span> <span class="n" style="width:22px">00</span> <span class="n" style="width:22px">00</span> <span class="n" style="width:22px">00</span></div>
<div class="r" style="left:5.5px;top:276px;"><span class="n" style="width:88px">00843100</span></div>
<div class="r" style="left:104.0px;top:276px;"><span class="n" style="width:22px">00</span> <span class="n" style="width:22px">00</span> <span class="n" style="width:22px">00</span> <span class="n" style="width:22px">00</span> <span class="n" style="width:22px">00</span> <span class="n" style="width:22px">00</span> <span class="n" style="width:22px">00</span> <span class="n" style="width:22px">00</span> <span class="n" style="width:22px">00</span> <span class="n" style="width:22px">00</span> <span class="n" style="width:22px">00</span> <span class="n" style="width:22px">00</span> <span class="n" style="width:22px">00</span></div>
</div>
<div class="sb" style="left:537px;top:415px;width:16px;height:278px"><div class="th" style="top:17px;height:17px"></div><svg width="16" height="278" viewBox="0 0 16 278" style="position:absolute;left:0;top:0"><path d="M4.85 11.4L7.95 7.8L11.05 11.4M4.85 267.60L7.95 271.20L11.05 267.60" fill="none" stroke="#4c4c4c" stroke-width="1.9"/></svg></div>
<div class="pane" style="left:555px;top:415px;width:555px;height:278px">
<div class="selbg" style="left:99px;top:0;width:456px;height:16px"></div>
<div class="selad" style="left:0;top:0;width:98px;height:16px"></div>
<div style="position:absolute;left:208px;top:0;width:1px;height:16px;background:#000"></div>
<div style="position:absolute;left:263px;top:0;width:1px;height:16px;background:#000"></div>
<div class="r" style="left:5.5px;top:0px;color:#000"><span class="n" style="width:44px">0129</span><span class="u" style="width:33px">FEF</span><span class="n" style="width:11px">8</span></div>
<div class="r" style="left:115.5px;top:0px;"><span class="n" style="width:88px">75690419</span></div>
<div class="r" style="left:213px;top:0px;"><span class="bx">▯</span><span class="bx">▯</span><span class="d" style="width:22px">iu</span></div>
<div class="r" style="left:268px;top:0px;"><span class="u" style="width:66px">RETURN</span> <span class="d" style="width:22px">to</span> <span class="u" style="width:66px">KERNEL</span><span class="n" style="width:22px">32</span><span class="d" style="width:11px">.</span><span class="n" style="width:77px">7569041</span></div>
<div class="r" style="left:5.5px;top:16px;"><span class="n" style="width:44px">0129</span><span class="u" style="width:44px">FEFC</span></div>
<div class="r" style="left:115.5px;top:16px;"><span class="n" style="width:88px">00000000</span></div>
<div class="r" style="left:213px;top:16px;"><span class="d" style="width:44px">....</span></div>
<div class="r" style="left:5.5px;top:32px;"><span class="n" style="width:44px">0129</span><span class="u" style="width:22px">FF</span><span class="n" style="width:22px">00</span></div>
<div class="r" style="left:115.5px;top:32px;"><span class="n" style="width:88px">75690400</span></div>
<div class="r" style="left:213px;top:32px;"><span class="d" style="width:11px">.</span><span class="bx">▯</span><span class="d" style="width:22px">iu</span></div>
<div class="r" style="left:268px;top:32px;"><span class="u" style="width:66px">KERNEL</span><span class="n" style="width:22px">32</span><span class="d" style="width:11px">.</span><span class="u" style="width:11px">B</span><span class="d" style="width:33px">ase</span><span class="u" style="width:11px">T</span><span class="d" style="width:55px">hread</span><span class="u" style="width:11px">I</span><span class="d" style="width:33px">nit</span><span class="u" style="width:11px">T</span><span class="d" style="width:22px">hu</span></div>
<div class="r" style="left:5.5px;top:48px;"><span class="n" style="width:44px">0129</span><span class="u" style="width:22px">FF</span><span class="n" style="width:22px">04</span></div>
<div class="r" style="left:115.5px;top:48px;"><span class="n" style="width:44px">0129</span><span class="u" style="width:22px">FF</span><span class="n" style="width:22px">60</span></div>
<div class="r" style="left:213px;top:48px;"><span class="d" style="width:33px">`ÿ)</span><span class="bx">▯</span></div>
<div class="r" style="left:5.5px;top:64px;"><span class="n" style="width:44px">0129</span><span class="u" style="width:22px">FF</span><span class="n" style="width:22px">08</span></div>
<div class="r" style="left:115.5px;top:64px;"><span class="n" style="width:22px">77</span><span class="u" style="width:22px">AA</span><span class="n" style="width:22px">72</span><span class="u" style="width:22px">ED</span></div>
<div class="r" style="left:213px;top:64px;"><span class="d" style="width:44px">írªw</span></div>
<div class="r" style="left:268px;top:64px;"><span class="u" style="width:66px">RETURN</span> <span class="d" style="width:22px">to</span> <span class="d" style="width:66px">ntdll.</span><span class="n" style="width:22px">77</span><span class="u" style="width:22px">AA</span><span class="n" style="width:22px">72</span><span class="u" style="width:22px">ED</span></div>
<div class="r" style="left:5.5px;top:80px;"><span class="n" style="width:44px">0129</span><span class="u" style="width:22px">FF</span><span class="n" style="width:11px">0</span><span class="u" style="width:11px">C</span></div>
<div class="r" style="left:115.5px;top:80px;"><span class="n" style="width:88px">00000000</span></div>
<div class="r" style="left:213px;top:80px;"><span class="d" style="width:44px">....</span></div>
<div class="r" style="left:5.5px;top:96px;"><span class="n" style="width:44px">0129</span><span class="u" style="width:22px">FF</span><span class="n" style="width:22px">10</span></div>
<div class="r" style="left:115.5px;top:96px;"><span class="n" style="width:11px">6</span><span class="u" style="width:11px">D</span><span class="n" style="width:55px">44438</span><span class="u" style="width:11px">A</span></div>
<div class="r" style="left:213px;top:96px;"><span class="d" style="width:11px">Š</span><span class="u" style="width:22px">CD</span><span class="d" style="width:11px">m</span></div>
<div class="r" style="left:5.5px;top:112px;"><span class="n" style="width:44px">0129</span><span class="u" style="width:22px">FF</span><span class="n" style="width:22px">14</span></div>
<div class="r" style="left:115.5px;top:112px;"><span class="n" style="width:88px">00000000</span></div>
<div class="r" style="left:213px;top:112px;"><span class="d" style="width:44px">....</span></div>
<div class="r" style="left:5.5px;top:128px;"><span class="n" style="width:44px">0129</span><span class="u" style="width:22px">FF</span><span class="n" style="width:22px">18</span></div>
<div class="r" style="left:115.5px;top:128px;"><span class="n" style="width:88px">00000000</span></div>
<div class="r" style="left:213px;top:128px;"><span class="d" style="width:44px">....</span></div>
<div class="r" style="left:5.5px;top:144px;"><span class="n" style="width:44px">0129</span><span class="u" style="width:22px">FF</span><span class="n" style="width:11px">1</span><span class="u" style="width:11px">C</span></div>
<div class="r" style="left:115.5px;top:144px;"><span class="n" style="width:88px">00000000</span></div>
<div class="r" style="left:213px;top:144px;"><span class="d" style="width:44px">....</span></div>
<div class="r" style="left:5.5px;top:160px;"><span class="n" style="width:44px">0129</span><span class="u" style="width:22px">FF</span><span class="n" style="width:22px">20</span></div>
<div class="r" style="left:115.5px;top:160px;"><span class="n" style="width:88px">00000000</span></div>
<div class="r" style="left:213px;top:160px;"><span class="d" style="width:44px">....</span></div>
<div class="r" style="left:5.5px;top:176px;"><span class="n" style="width:44px">0129</span><span class="u" style="width:22px">FF</span><span class="n" style="width:22px">24</span></div>
<div class="r" style="left:115.5px;top:176px;"><span class="n" style="width:88px">00000000</span></div>
<div class="r" style="left:213px;top:176px;"><span class="d" style="width:44px">....</span></div>
<div class="r" style="left:5.5px;top:192px;"><span class="n" style="width:44px">0129</span><span class="u" style="width:22px">FF</span><span class="n" style="width:22px">28</span></div>
<div class="r" style="left:115.5px;top:192px;"><span class="n" style="width:88px">00000000</span></div>
<div class="r" style="left:213px;top:192px;"><span class="d" style="width:44px">....</span></div>
<div class="r" style="left:5.5px;top:208px;"><span class="n" style="width:44px">0129</span><span class="u" style="width:22px">FF</span><span class="n" style="width:11px">2</span><span class="u" style="width:11px">C</span></div>
<div class="r" style="left:115.5px;top:208px;"><span class="n" style="width:88px">00000000</span></div>
<div class="r" style="left:213px;top:208px;"><span class="d" style="width:44px">....</span></div>
<div class="r" style="left:5.5px;top:224px;"><span class="n" style="width:44px">0129</span><span class="u" style="width:22px">FF</span><span class="n" style="width:22px">30</span></div>
<div class="r" style="left:115.5px;top:224px;"><span class="n" style="width:88px">00000000</span></div>
<div class="r" style="left:213px;top:224px;"><span class="d" style="width:44px">....</span></div>
<div class="r" style="left:5.5px;top:240px;"><span class="n" style="width:44px">0129</span><span class="u" style="width:22px">FF</span><span class="n" style="width:22px">34</span></div>
<div class="r" style="left:115.5px;top:240px;"><span class="n" style="width:88px">00000000</span></div>
<div class="r" style="left:213px;top:240px;"><span class="d" style="width:44px">....</span></div>
<div class="r" style="left:5.5px;top:256px;"><span class="n" style="width:44px">0129</span><span class="u" style="width:22px">FF</span><span class="n" style="width:22px">38</span></div>
<div class="r" style="left:115.5px;top:256px;"><span class="n" style="width:88px">00000000</span></div>
<div class="r" style="left:213px;top:256px;"><span class="d" style="width:44px">....</span></div>
<div class="r" style="left:5.5px;top:272px;"><span class="n" style="width:44px">0129</span><span class="u" style="width:22px">FF</span><span class="n" style="width:11px">3</span><span class="u" style="width:11px">C</span></div>
<div class="r" style="left:115.5px;top:272px;"><span class="n" style="width:88px">00000000</span></div>
<div class="r" style="left:213px;top:272px;"><span class="d" style="width:44px">....</span></div>
<div style="position:absolute;left:104px;top:54px;width:8px;height:230px;border-left:2px solid #c6c6c6;border-top:2px solid #c6c6c6;border-top-left-radius:2px"></div>
</div>
<div class="sb" style="left:1111px;top:415px;width:17px;height:278px"><div class="th" style="top:242px;height:17px"></div><svg width="17" height="278" viewBox="0 0 17 278" style="position:absolute;left:0;top:0"><path d="M5.35 11.4L8.45 7.8L11.55 11.4M5.35 267.60L8.45 271.20L11.55 267.60" fill="none" stroke="#4c4c4c" stroke-width="1.9"/></svg></div>
<div id="cmd"></div>
<div id="status">
<div class="r" style="left:5px;top:1px;color:#000"><span class="B"><span class="d" style="width:11px">[</span><span class="n" style="width:22px">10</span><span class="d" style="width:11px">:</span><span class="n" style="width:22px">15</span><span class="d" style="width:11px">:</span><span class="n" style="width:22px">39</span><span class="d" style="width:11px">]</span> <span class="u" style="width:11px">A</span><span class="d" style="width:55px">ccess</span> <span class="d" style="width:99px">violation</span> <span class="d" style="width:44px">when</span></span></div>
<div style="position:absolute;left:363px;top:0px;width:120px;height:17px;background:#7fff08"></div>
<div class="r" style="left:487.5px;top:1px;color:#000"><span class="B"><span class="d" style="width:11px">[</span><span class="n" style="width:88px">00000001</span><span class="d" style="width:11px">]</span> <span class="d" style="width:11px">-</span> <span class="d" style="width:33px">use</span> <span class="u" style="width:11px">S</span><span class="d" style="width:55px">hift+</span><span class="u" style="width:11px">F</span><span class="n" style="width:11px">7</span><span class="d" style="width:11px">/</span><span class="u" style="width:11px">F</span><span class="n" style="width:11px">8</span><span class="d" style="width:11px">/</span><span class="u" style="width:11px">F</span><span class="n" style="width:11px">9</span> <span class="d" style="width:22px">to</span> <span class="d" style="width:44px">pass</span></span></div>
<div style="position:absolute;left:918px;top:1px;width:1px;height:17px;background:#fff"></div>
<div style="position:absolute;left:919px;top:1px;width:1px;height:17px;background:#707070"></div>
<div style="position:absolute;left:983px;top:1px;width:1px;height:17px;background:#808080"></div>
<div style="position:absolute;left:985px;top:1px;width:142px;height:18px;background:#ffff00"></div>
<div class="r" style="left:987px;top:1px;color:#f00"><span class="B"><span class="u" style="width:11px">P</span><span class="d" style="width:55px">aused</span></span></div>
</div>
<div id="frame"></div>
</div></body></html>
